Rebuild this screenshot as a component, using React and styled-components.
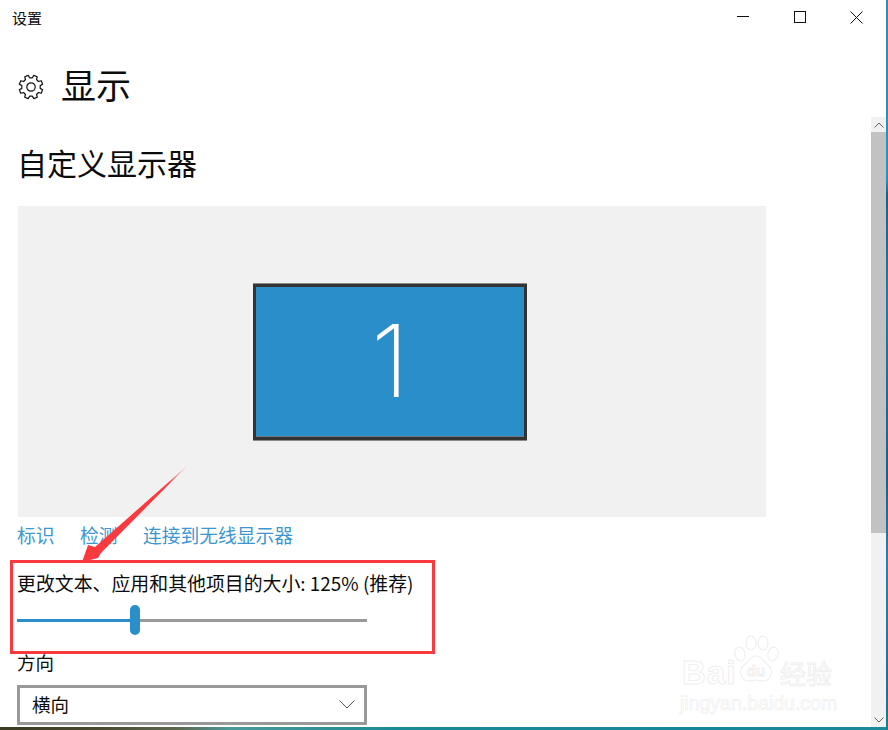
import React from "react";
import styled, { createGlobalStyle } from "styled-components";

const Global = createGlobalStyle`
  html, body { margin: 0; padding: 0; background: #fff; }
  * { box-sizing: border-box; }
`;
const FONT = `"Noto Sans CJK SC", "Noto Sans", sans-serif`;

const Screen = styled.div`
  width: 888px; height: 730px; position: relative; overflow: hidden;
  display: flex; flex-direction: column;
  font-family: ${FONT}; color: #0c0c0c;
  background:
    linear-gradient(180deg, #2a8cc8 0, #2a8cc8 180px, #17608f 195px, #2278ad 300px, #17608f 480px, #2a7fb5 560px, #1d6f9c 690px, #16808f 730px) right top / 2px 100% no-repeat,
    linear-gradient(90deg, #3a3a22, #4a4a30 100px, #5c6a50 180px, #4b9a9a 230px, #1a8a94 400px, #14879a 700px, #1a8a9a 888px);
`;
const Window = styled.div`
  width: 886px; height: 727px; flex: none; background: #fff; display: flex; flex-direction: column;
`;
const TitleBar = styled.div`
  height: 36px; flex: none; display: flex; align-items: center; justify-content: space-between;
`;
const TitleText = styled.div`font-size: 15px; line-height: 20px; margin-left: 12px; margin-top: -1px;`;
const Controls = styled.div`display: flex; align-items: center; margin-top: -2px; padding-right: 1px;`;
const Control = styled.div`width: 57px; height: 30px; display: flex; align-items: center; justify-content: center;`;
const Body = styled.div`flex: 1; display: flex; min-height: 0;`;
const Content = styled.div`flex: 1; padding-left: 18px; min-width: 0;`;
const PageHead = styled.div`display: flex; align-items: center; height: 44px; margin-top: 26px;`;
const GearBox = styled.div`width: 26px; height: 26px; margin: 6px 17px 0 0; display: flex; align-items: center; justify-content: center;`;
const PageTitle = styled.h1`margin: 0; font-size: 35px; font-weight: 400; line-height: 44px;`;
const SectionTitle = styled.h2`margin: 34px 0 0 -1px; font-size: 30px; font-weight: 400; line-height: 44px;`;
const Stage = styled.div`
  width: 748px; height: 311px; margin-top: 22px; background: #f1f1f1;
  display: flex; align-items: center; justify-content: center;
`;
const Monitor = styled.div`
  width: 274px; height: 156px; margin-right: 4px; background: #2a8ecb; border: 3px solid #333;
  box-shadow: 0 -1px 0 #8a8a8a, 0 1px 0 #8a8a8a, inset 0 -1px 0 #6a7c88;
  color: #fff; display: flex; align-items: center; justify-content: center;
`;
const MonitorNum = styled.span`font-family: "Inter", sans-serif; font-weight: 200; font-size: 100px; line-height: 1; margin-top: -2px;`;
const Links = styled.div`display: flex; gap: 25.5px; margin: 6px 0 0 -1px; height: 24px; align-items: center;`;
const LinkItem = styled.a`font-size: 18.75px; line-height: 24px; color: #3d96d0;`;
const Field = styled.div`margin-top: 24px; margin-left: -1px;`;
const Label = styled.div`font-size: 18.9px; line-height: 24px; white-space: nowrap;`;
const Slider = styled.div`
  width: 350px; height: 30px; margin-top: 10px; display: flex; align-items: center;
`;
const Filled = styled.div`height: 3px; background: #2a8ecb;`;
const Rest = styled.div`height: 3px; flex: 1; background: #999;`;
const Thumb = styled.div`width: 10px; height: 30px; border-radius: 5px; background: #2a8ecb; flex: none;`;
const Orientation = styled.div`font-size: 18.5px; line-height: 24px; margin-top: 15px; margin-left: -1px;`;
const Select = styled.div`
  width: 350px; height: 40px; margin-top: 11px; margin-left: -1px; border: 3px solid #999;
  display: flex; align-items: center; justify-content: space-between; padding: 0 9px 2px 12px;
  font-size: 18.5px; line-height: 24px;
`;
const Scrollbar = styled.div`
  width: 15px; background: #f1f1f1; flex: none; display: flex; flex-direction: column;
  margin-top: 81px;
`;
const ScrollCap = styled.div`height: 15px; display: flex; align-items: center; justify-content: center; flex: none;`;
const ScrollThumb = styled.div`height: 401px; background: #c2c2c2; flex: none;`;
const ScrollSpace = styled.div`flex: 1;`;

const Highlight = styled.div`
  position: absolute; left: 10px; top: 560px; width: 425px; height: 94px;
  border: 3px solid #fb3a40; pointer-events: none;
`;
const ArrowSvg = styled.svg`position: absolute; left: 70px; top: 455px; pointer-events: none;`;
const Watermark = styled.div`
  position: absolute; left: 680px; top: 634px; width: 160px; height: 76px; pointer-events: none;
`;
const WmMain = styled.div`display: flex; align-items: flex-end; height: 56px;`;
const WmBai = styled.span`
  font-family: "Liberation Sans", sans-serif; font-weight: 700; font-size: 33px; line-height: 34px; color: #fff;
  -webkit-text-stroke: 1px #efefef; margin-left: 2px; width: 50px; flex: none; letter-spacing: 1px;
`;
const WmCn = styled.span`
  font-size: 26px; line-height: 34px; color: #fff; -webkit-text-stroke: 1px #efefef; white-space: nowrap;
`;
const WmUrl = styled.div`
  font-family: "Liberation Sans", sans-serif; font-size: 19.5px; line-height: 22px; color: #fff; -webkit-text-stroke: 0.7px #efefef;
  white-space: nowrap; margin-top: 2px;
`;
const Paw = styled.svg`width: 48px; height: 56px; flex: none;`;

const gearPoints = () => {
  const pts = [];
  const polar = (r, d) => {
    const a = (d * Math.PI) / 180;
    return `${(13 + r * Math.cos(a)).toFixed(2)},${(13 + r * Math.sin(a)).toFixed(2)}`;
  };
  for (let i = 0; i < 8; i++) {
    const a = i * 45 + 22.5;
    pts.push(polar(9.3, a - 14), polar(12, a - 9), polar(12, a + 9), polar(9.3, a + 14));
  }
  return pts.join(" ");
};

const Gear = () => (
  <svg width="26" height="26" viewBox="0 0 26 26" fill="none" stroke="#111" strokeWidth="1.2" strokeLinejoin="round">
    <circle cx="13" cy="13" r="4.2" />
    <polygon points={gearPoints()} />
  </svg>
);

export default function App() {
  return (
    <Screen>
      <Global />
      <Window>
        <TitleBar>
          <TitleText>设置</TitleText>
          <Controls>
            <Control>
              <svg width="12" height="12" viewBox="0 0 12 12"><path d="M0 5.500h12" stroke="#111" strokeWidth="1" /></svg>
            </Control>
            <Control>
              <svg width="12" height="12" viewBox="0 0 12 12"><rect x=".5" y=".5" width="11" height="11" fill="none" stroke="#111" /></svg>
            </Control>
            <Control>
              <svg width="13" height="13" viewBox="0 0 13 13"><path d="M.5.5l12 12M12.500.5l-12 12" stroke="#111" fill="none" /></svg>
            </Control>
          </Controls>
        </TitleBar>
        <Body>
          <Content>
            <PageHead>
              <GearBox><Gear /></GearBox>
              <PageTitle>显示</PageTitle>
            </PageHead>
            <SectionTitle>自定义显示器</SectionTitle>
            <Stage>
              <Monitor><MonitorNum>1</MonitorNum></Monitor>
            </Stage>
            <Links>
              <LinkItem>标识</LinkItem>
              <LinkItem>检测</LinkItem>
              <LinkItem>连接到无线显示器</LinkItem>
            </Links>
            <Field>
              <Label>更改文本、应用和其他项目的大小: 125% (推荐)</Label>
              <Slider>
                <Filled style={{ width: 113 }} />
                <Thumb />
                <Rest />
              </Slider>
            </Field>
            <Orientation>方向</Orientation>
            <Select>
              横向
              <svg width="16" height="9" viewBox="0 0 16 9"><path d="M.5.5L8 8l7.500-7.500" fill="none" stroke="#555" /></svg>
            </Select>
          </Content>
          <Scrollbar>
            <ScrollCap>
              <svg width="10" height="6" viewBox="0 0 10 6"><path d="M.5 5.500L5 1l4.500 4.500" fill="none" stroke="#666" /></svg>
            </ScrollCap>
            <ScrollThumb />
            <ScrollSpace />
            <ScrollCap>
              <svg width="10" height="6" viewBox="0 0 10 6"><path d="M.5.5L5 5l4.500-4.500" fill="none" stroke="#666" /></svg>
            </ScrollCap>
          </Scrollbar>
        </Body>
      </Window>
      <Highlight />
      <ArrowSvg width="130" height="120" viewBox="0 0 130 120">
        <defs>
          <linearGradient id="arrowFade" x1="0" y1="1" x2="1" y2="0">
            <stop offset="0" stopColor="#fb3a40" />
            <stop offset=".8" stopColor="#fb3a40" />
            <stop offset="1" stopColor="#fb3a40" stopOpacity=".15" />
          </linearGradient>
        </defs>
        <path d="M118 10L31 98l-3 5-16 4 6-17 7 2z" fill="url(#arrowFade)" />
      </ArrowSvg>
      <Watermark>
        <WmMain>
          <WmBai>Bai</WmBai>
          <Paw viewBox="0 0 48 56">
            <g fill="#fff" stroke="#efefef" strokeWidth="1.2">
              <ellipse cx="8" cy="20" rx="5" ry="7" transform="rotate(-15 8 20)" />
              <ellipse cx="19" cy="9" rx="5" ry="7" />
              <ellipse cx="31" cy="9" rx="5" ry="7" />
              <ellipse cx="41" cy="20" rx="5" ry="7" transform="rotate(15 41 20)" />
              <path d="M24 22c6 0 8 6 13 10 5 5 2 15-6 15-3 0-5-1-7-1s-4 1-7 1c-8 0-11-10-6-15 5-4 7-10 13-10z" />
            </g>
            <text x="24" y="42" textAnchor="middle" fontFamily="Liberation Sans" fontWeight="700" fontSize="15" fill="#fff" stroke="#e8e8e8" strokeWidth=".7">du</text>
          </Paw>
          <WmCn>经验</WmCn>
        </WmMain>
        <WmUrl>jingyan.baidu.com</WmUrl>
      </Watermark>
    </Screen>
  );
}
